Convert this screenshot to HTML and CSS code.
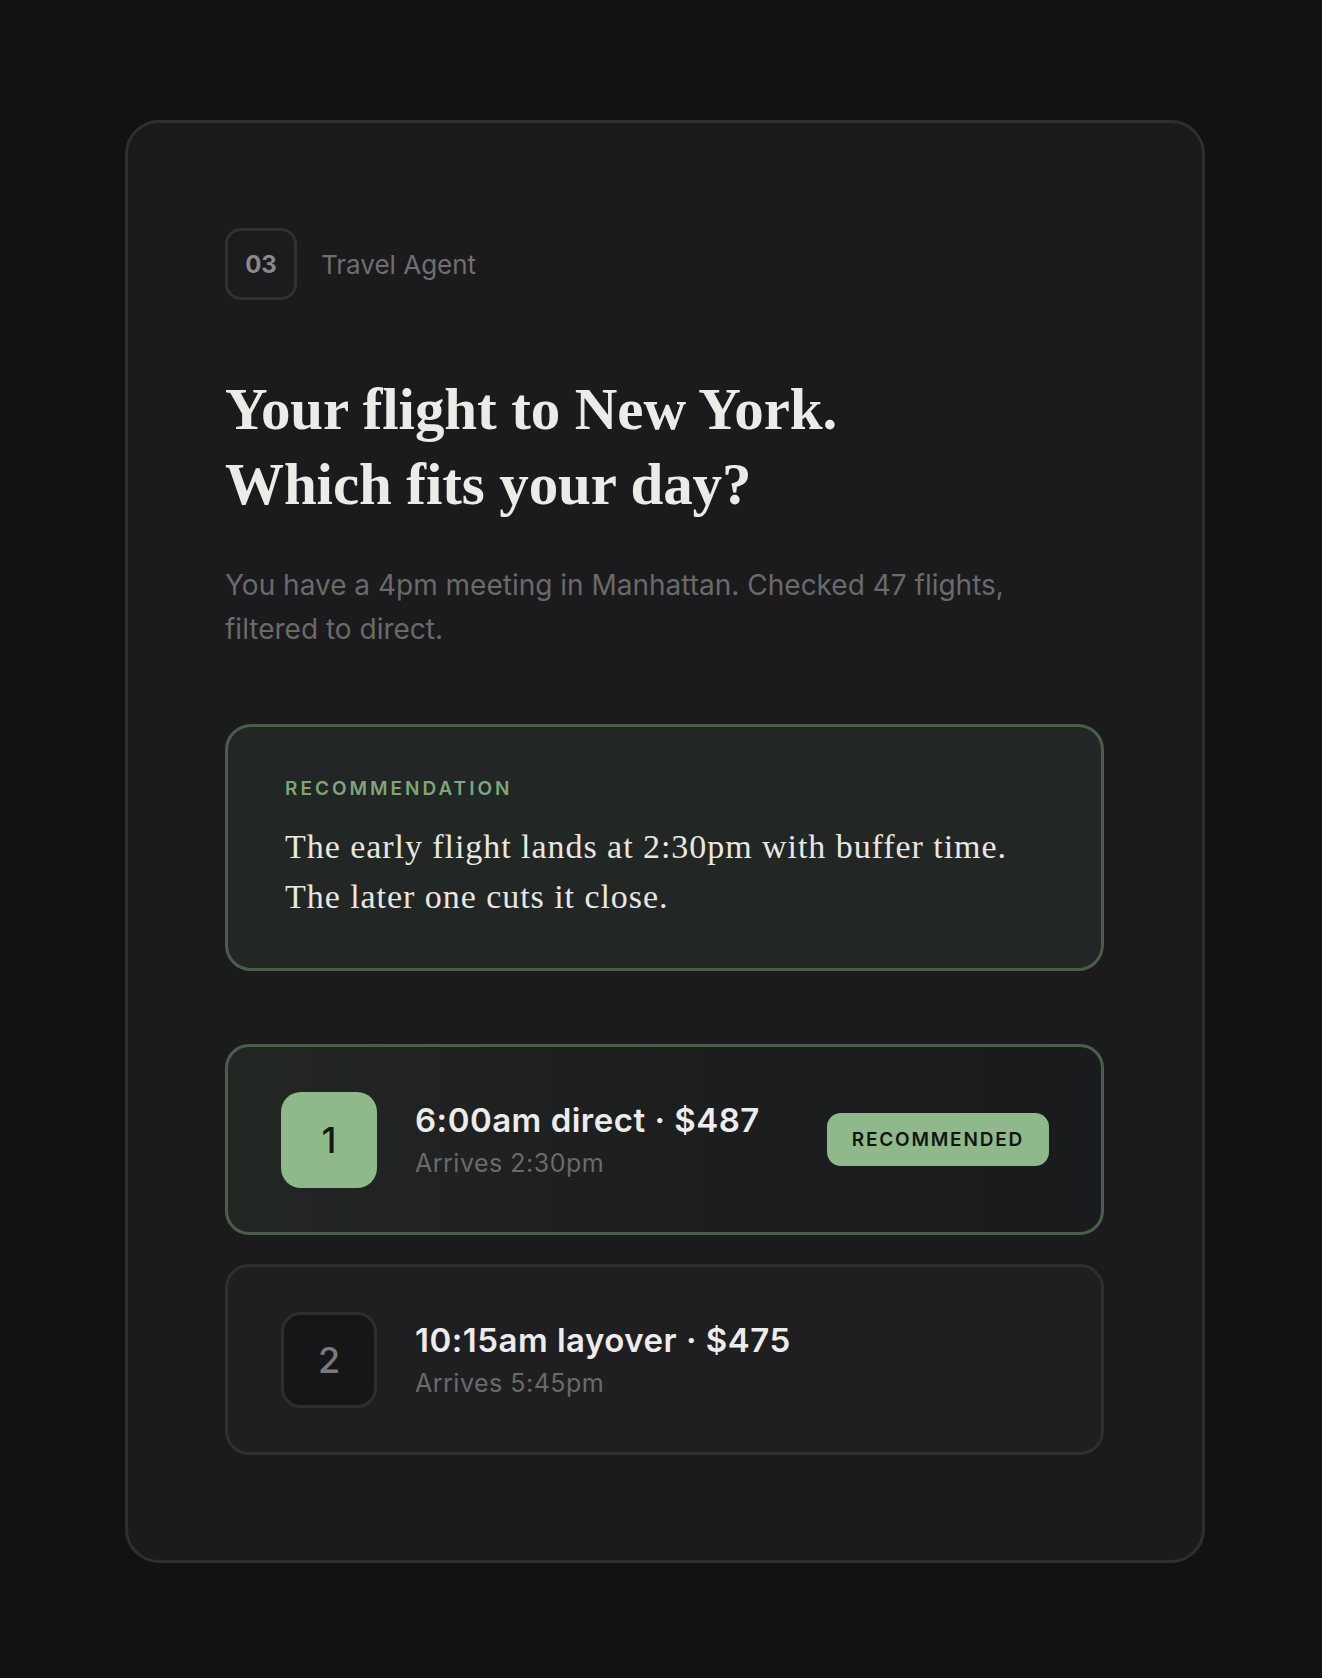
FILE: index.html
```html
<!DOCTYPE html>
<html lang="en">
<head>
<meta charset="utf-8">
<title>Travel Agent</title>
<link rel="stylesheet" href="styles.css">
</head>
<body>
<div class="page">
  <section class="card">
    <header class="step">
      <div class="step-num">03</div>
      <div class="step-label">Travel Agent</div>
    </header>
    <h1 class="title">Your flight to New York.<br>Which fits your day?</h1>
    <p class="subtitle">You have a 4pm meeting in Manhattan. Checked 47 flights,<br>filtered to direct.</p>

    <div class="reco">
      <div class="reco-label">RECOMMENDATION</div>
      <p class="reco-text">The early flight lands at 2:30pm with buffer time.<br>The later one cuts it close.</p>
    </div>

    <div class="options">
      <div class="option option-active">
        <div class="opt-num opt-num-active">1</div>
        <div class="opt-info">
          <div class="opt-title">6:00am direct · $487</div>
          <div class="opt-sub">Arrives 2:30pm</div>
        </div>
        <div class="pill">RECOMMENDED</div>
      </div>
      <div class="option">
        <div class="opt-num">2</div>
        <div class="opt-info">
          <div class="opt-title">10:15am layover · $475</div>
          <div class="opt-sub">Arrives 5:45pm</div>
        </div>
      </div>
    </div>
  </section>
</div>
</body>
</html>
```

FILE: styles.css
```css
* { box-sizing: border-box; }
html, body { margin: 0; padding: 0; }
body {
  background: #121214;
  font-family: Inter, "Liberation Sans", sans-serif;
  color: #ececec;
}
.page {
  padding: 120px 0 115px 125px;
}
.card {
  width: 1080px;
  background: #1b1b1d;
  border: 3px solid #2f2f31;
  border-radius: 34px;
  padding: 105px 98px 105px 97px;
}
.step {
  display: flex;
  align-items: center;
  gap: 24px;
}
.step-num {
  width: 72px;
  height: 72px;
  border: 3px solid #313133;
  border-radius: 16px;
  background: #1c1c1e;
  display: flex;
  align-items: center;
  justify-content: center;
  font-size: 24px;
  font-weight: 700;
  color: #8a8a8a;
}
.step-label {
  font-size: 26px;
  color: #6f6f6f;
}
.title {
  margin: 72px 0 0;
  font-family: "Liberation Serif", serif;
  font-weight: 700;
  font-size: 59px;
  line-height: 75px;
  letter-spacing: -0.1px;
  color: #ecebe7;
}
.subtitle {
  margin: 41px 0 0;
  font-size: 28px;
  line-height: 44px;
  color: #6a6a6a;
}
.reco {
  margin-top: 73px;
  background: #222624;
  border: 3px solid #4b5d4a;
  border-radius: 26px;
  padding: 50px 56px 46px 57px;
}
.reco-label {
  font-size: 19px;
  line-height: 24px;
  font-weight: 600;
  letter-spacing: 3px;
  color: #7fa57a;
}
.reco-text {
  margin: 21px 0 0;
  font-family: "Liberation Serif", serif;
  font-size: 34px;
  line-height: 50px;
  letter-spacing: 0.95px;
  color: #e9e7e2;
}
.options {
  margin-top: 73px;
  display: flex;
  flex-direction: column;
  gap: 29px;
}
.option {
  height: 191px;
  display: flex;
  align-items: center;
  padding: 0 52px 0 53px;
  background: #1f1f21;
  border: 3px solid #2f2f31;
  border-radius: 24px;
}
.option-active {
  background: linear-gradient(90deg, #222623 0%, #1c1d1e 60%, #1a1b1c 100%);
  border-color: #4b5d4a;
}
.opt-num {
  width: 96px;
  height: 96px;
  flex: none;
  border-radius: 20px;
  background: #161618;
  border: 3px solid #2e2e30;
  display: flex;
  align-items: center;
  justify-content: center;
  font-size: 36px;
  font-weight: 500;
  color: #7a7a7a;
}
.opt-num-active {
  background: #8fb98a;
  border: none;
  color: #161816;
}
.opt-info {
  margin-left: 38px;
  display: flex;
  flex-direction: column;
  gap: 9px;
}
.opt-title {
  font-size: 33px;
  line-height: 38px;
  font-weight: 600;
  letter-spacing: 0.5px;
  color: #ececec;
}
.opt-sub {
  font-size: 25px;
  line-height: 30px;
  letter-spacing: 0.5px;
  color: #6a6a6a;
}
.pill {
  margin-left: auto;
  height: 53px;
  padding: 0 25px;
  border-radius: 14px;
  background: #8fb98a;
  color: #121512;
  display: flex;
  align-items: center;
  font-size: 19px;
  font-weight: 600;
  letter-spacing: 1.8px;
}
```
